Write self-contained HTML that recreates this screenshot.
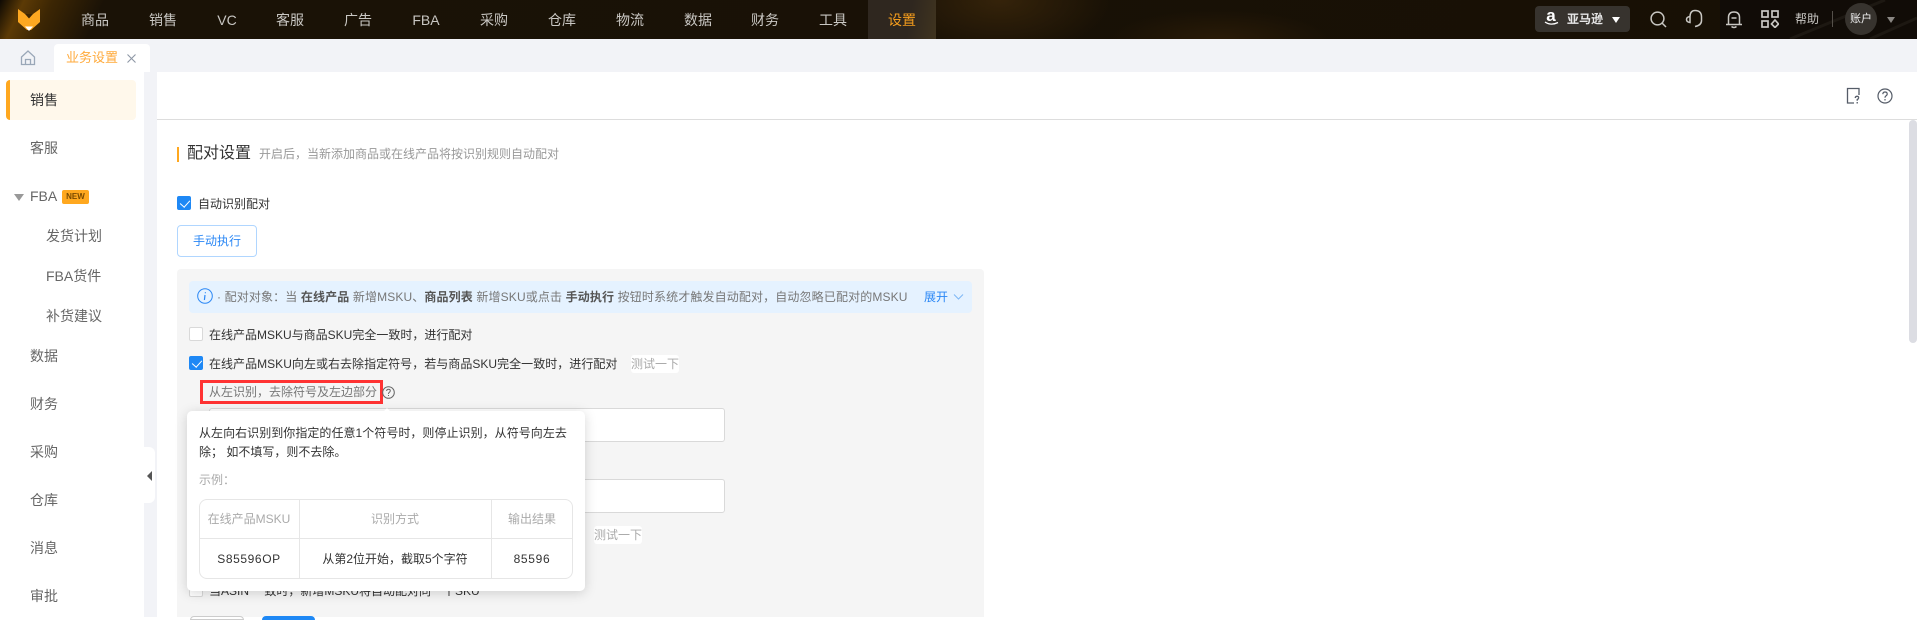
<!DOCTYPE html>
<html lang="zh"><head><meta charset="utf-8"><title>业务设置</title>
<style>
*{box-sizing:border-box}
html,body{margin:0;padding:0;width:1917px;height:617px;overflow:hidden;background:#fff;font-family:"Liberation Sans","Noto Sans CJK SC",sans-serif;font-size:12px;color:#333}
.a{position:absolute;white-space:nowrap}
.t{position:absolute;white-space:nowrap;line-height:20px;height:20px}
.nav{position:absolute;top:10px;width:68px;text-align:center;font-size:14px;line-height:20px;color:#c9c7c3}
.side{position:absolute;left:30px;font-size:14px;line-height:20px;color:#666;white-space:nowrap}
.sub{position:absolute;left:46px;font-size:14px;line-height:20px;color:#666;white-space:nowrap}
.cb{position:absolute;width:14px;height:14px;border-radius:2px;background:#fff;border:1px solid #d9d9d9}
.cb.on{background:#1e88f5;border-color:#1e88f5}
.cb.on:after{content:"";position:absolute;left:3.5px;top:1px;width:5px;height:8px;border:solid #fff;border-width:0 1.3px 1.3px 0;transform:rotate(42deg)}
.g{color:#999}
.test{position:absolute;color:#aaa;background:#fff;border-radius:3px;line-height:18px;height:18px;font-size:12px;white-space:nowrap}
.input{position:absolute;left:209px;width:516px;height:34px;background:#fff;border:1px solid #d9d9d9;border-radius:3px}
</style></head><body>

<!-- header -->
<div class="a" style="left:0;top:0;width:1917px;height:39px;background:
radial-gradient(ellipse 110px 55px at 1000px 0,#35230a 0,rgba(53,35,10,0) 100%),
radial-gradient(ellipse 110px 30px at 1220px 40px,#2a1b08 0,rgba(42,27,8,0) 100%),
linear-gradient(115deg,#0e0a04 0,#5c3a05 22px,#3c2604 48px,#1a1206 95px,#171005 100%)"></div>
<div class="a" style="left:1720px;top:0;width:197px;height:39px;background:#110c07"></div>
<svg class="a" style="left:1720px;top:0" width="197" height="39"><path d="M70 39L165 0M150 39L197 18" stroke="#1d1812" stroke-width="3" fill="none"/></svg>

<svg class="a" style="left:18px;top:9px" width="22" height="22" viewBox="0 0 22 22"><path d="M0 0L7 5H15L22 0V13L13 21H9L0 13Z" fill="#fda821"/><path d="M7 5L11 9.5L15 5Z" fill="#3a2505"/><path d="M7 17.5H15L11 22Z" fill="#fff"/></svg>

<div class="nav" style="left:61px">商品</div><div class="nav" style="left:129px">销售</div><div class="nav" style="left:193px">VC</div><div class="nav" style="left:256px">客服</div><div class="nav" style="left:324px">广告</div><div class="nav" style="left:392px">FBA</div><div class="nav" style="left:460px">采购</div><div class="nav" style="left:528px">仓库</div><div class="nav" style="left:596px">物流</div><div class="nav" style="left:664px">数据</div><div class="nav" style="left:731px">财务</div><div class="nav" style="left:799px">工具</div>
<div class="a" style="left:868px;top:0;width:68px;height:39px;background:linear-gradient(100deg,#2f271f 0,#2f271f 60%,#40341f 100%)"></div>
<div class="nav" style="left:868px;color:#f59d1c">设置</div>

<div class="a" style="left:1535px;top:6px;width:95px;height:26px;background:#37332e;border-radius:4px"></div>
<div class="a" style="left:1543px;top:7px;width:16px;font-size:17px;font-weight:bold;line-height:18px;color:#fff;text-align:center">a</div>
<svg class="a" style="left:1543px;top:21px" width="17" height="6"><path d="M2 1Q8 5 15 1.5" stroke="#fff" stroke-width="1.3" fill="none"/></svg>
<div class="t" style="left:1567px;top:9px;color:#e6e6e6;font-size:12px;font-weight:bold">亚马逊</div>
<div class="a" style="left:1612px;top:17px;width:0;height:0;border:4px solid transparent;border-top:6px solid #fff;border-bottom:0"></div>

<svg class="a" style="left:1649px;top:10px" width="19" height="19" viewBox="0 0 19 19" fill="none" stroke="#c9c7c3" stroke-width="1.5"><circle cx="8.5" cy="8.5" r="6.4"/><path d="M13 13L17 17"/></svg>
<svg class="a" style="left:1685px;top:9px" width="18" height="20" viewBox="0 0 18 20" fill="none" stroke="#c9c7c3" stroke-width="1.5"><path d="M5 7Q5.5 1.5 10 1.5Q16.5 1.5 16.5 8V12Q16 16.5 10 17.5"/><path d="M5 7.5Q1.5 8 1.5 10.5Q1.5 13 5 13.5Z"/></svg>
<svg class="a" style="left:1725px;top:10px" width="18" height="19" viewBox="0 0 18 19" fill="none" stroke="#c9c7c3" stroke-width="1.5"><path d="M3.5 14V7.5Q3.5 2 9 2Q14.5 2 14.5 7.5V14"/><path d="M1 14.5H17"/><path d="M6.5 8H11.5"/><path d="M6.5 16.5Q9 18.5 11.5 16.5"/></svg>
<svg class="a" style="left:1761px;top:10px" width="18" height="18" viewBox="0 0 18 18" fill="none" stroke="#c9c7c3" stroke-width="1.7"><rect x="1" y="1" width="6" height="6"/><rect x="11" y="1" width="6" height="6"/><rect x="1" y="11" width="6" height="6"/><path d="M14 10L17.5 14L14 17.5L10.5 14Z"/></svg>
<div class="t" style="left:1795px;top:9px;color:#c9c7c3">帮助</div>
<div class="a" style="left:1832px;top:11px;width:1px;height:16px;background:#55504a"></div>
<div class="a" style="left:1845px;top:3px;width:32px;height:32px;border-radius:50%;background:#37332e;color:#f0f0f0;font-size:11px;line-height:33px;text-align:center">账户</div>
<div class="a" style="left:1887px;top:17px;width:0;height:0;border:4px solid transparent;border-top:6px solid #8a8783;border-bottom:0"></div>

<!-- tab strip -->
<div class="a" style="left:0;top:39px;width:1917px;height:33px;background:#f2f3f7"></div>
<svg class="a" style="left:20px;top:50px" width="16" height="16" viewBox="0 0 16 16" fill="none" stroke="#9aa7b8" stroke-width="1.3"><path d="M1.5 7L8 1L14.5 7V14.5H1.5Z"/><path d="M5.5 14.5V9.5H10.5V14.5"/></svg>
<div class="a" style="left:54px;top:44px;width:96px;height:29px;background:#fff;border-radius:4px 4px 0 0"></div>
<div class="t" style="left:66px;top:48px;color:#ffaa3b;font-size:13px">业务设置</div>
<svg class="a" style="left:126px;top:53px" width="11" height="11" fill="none" stroke="#8d97a5" stroke-width="1.1"><path d="M1.5 1.5L9.5 9.5M9.5 1.5L1.5 9.5"/></svg>

<!-- sidebar -->
<div class="a" style="left:0;top:72px;width:144px;height:545px;background:#fff"></div>
<div class="a" style="left:144px;top:72px;width:13px;height:545px;background:#f2f3f7"></div>
<div class="a" style="left:6px;top:80px;width:130px;height:40px;background:#fff8eb;border-radius:4px;border-left:4px solid #ffa81f"></div>
<div class="side" style="top:90px;color:#333">销售</div>
<div class="side" style="top:138px">客服</div>
<div class="a" style="left:14px;top:194px;width:0;height:0;border:5.5px solid transparent;border-top:7px solid #999;border-bottom:0"></div>
<div class="side" style="top:186px">FBA</div>
<div class="a" style="left:62px;top:190px;width:27px;height:14px;background:#ffa81f;border-radius:2px;color:#7a4a00;font-size:8px;line-height:14px;text-align:center;font-weight:bold">NEW</div>
<div class="sub" style="top:226px">发货计划</div>
<div class="sub" style="top:266px">FBA货件</div>
<div class="sub" style="top:306px">补货建议</div>
<div class="side" style="top:346px">数据</div>
<div class="side" style="top:394px">财务</div>
<div class="side" style="top:442px">采购</div>
<div class="side" style="top:490px">仓库</div>
<div class="side" style="top:538px">消息</div>
<div class="side" style="top:586px">审批</div>
<div class="a" style="left:144px;top:447px;width:11px;height:56px;background:#fff;border-radius:0 6px 6px 0"></div>
<div class="a" style="left:147px;top:471px;width:0;height:0;border:5px solid transparent;border-right:5px solid #555;border-left:0"></div>

<!-- content -->
<div class="a" style="left:157px;top:72px;width:1760px;height:48px;background:#fff;border-bottom:1px solid #ddd"></div>
<svg class="a" style="left:1846px;top:87px" width="14" height="17" viewBox="0 0 14 17" fill="none" stroke="#555c68" stroke-width="1.3"><path d="M8 16H1.5V1.5H13V8"/><path d="M9.2 11Q9.4 9.3 11 9.3Q12.8 9.3 12.6 11Q12.4 12 11.2 12.6V13.8"/><path d="M11.2 15V16.5"/></svg>
<svg class="a" style="left:1877px;top:88px" width="16" height="16" viewBox="0 0 16 16" fill="none" stroke="#555c68" stroke-width="1.2"><circle cx="8" cy="8" r="7"/><path d="M5.8 6.2Q6 4 8 4Q10.2 4 10.2 6Q10.2 7.2 8.8 8Q8 8.5 8 9.8"/><path d="M8 11V12.5"/></svg>
<div class="a" style="left:1909px;top:120px;width:8px;height:223px;background:#dcdde3;border-radius:4px"></div>

<div class="a" style="left:177px;top:147px;width:2px;height:15px;background:#ffa81f"></div>
<div class="t" style="left:187px;top:144px;font-size:16px;color:#333;line-height:20px">配对设置</div>
<div class="t" style="left:259px;top:144px;color:#999">开启后，当新添加商品或在线产品将按识别规则自动配对</div>

<div class="cb on" style="left:177px;top:196px"></div>
<div class="t" style="left:198px;top:194px;color:#333">自动识别配对</div>
<div class="a" style="left:177px;top:225px;width:80px;height:32px;border:1px solid #b0d6ff;border-radius:4px;color:#2a87f5;text-align:center;line-height:30px;background:#fff">手动执行</div>

<div class="a" style="left:177px;top:269px;width:807px;height:348px;background:#f5f5f5;border-radius:4px 4px 0 0"></div>
<div class="a" style="left:189px;top:281px;width:783px;height:32px;background:#e5f2ff;border-radius:4px"></div>
<svg class="a" style="left:197px;top:288px" width="16" height="16" viewBox="0 0 16 16" fill="none" stroke="#2a87f5" stroke-width="1"><circle cx="8" cy="8" r="7.3"/><path d="M8.4 4.2V5.2M8 7L7.4 12" stroke-width="1.2"/></svg>
<div class="t" style="left:217px;top:287px;color:#777;letter-spacing:.13px">· 配对对象：当 <b style="color:#555">在线产品</b> 新增MSKU、<b style="color:#555">商品列表</b> 新增SKU或点击 <b style="color:#555">手动执行</b> 按钮时系统才触发自动配对，自动忽略已配对的MSKU</div>
<div class="t" style="left:924px;top:287px;color:#2a87f5">展开</div>
<svg class="a" style="left:953px;top:293px" width="11" height="8" fill="none" stroke="#7db7f5" stroke-width="1"><path d="M1 1.5L5.5 6L10 1.5"/></svg>

<div class="cb" style="left:189px;top:327px"></div>
<div class="t" style="left:209px;top:325px;color:#333">在线产品MSKU与商品SKU完全一致时，进行配对</div>
<div class="cb on" style="left:189px;top:356px"></div>
<div class="t" style="left:209px;top:354px;color:#333;letter-spacing:.03px">在线产品MSKU向左或右去除指定符号，若与商品SKU完全一致时，进行配对</div>
<div class="test" style="left:631px;top:355px">测试一下</div>

<div class="a" style="left:200px;top:380px;width:183px;height:24px;border:3px solid #f33"></div>
<div class="t" style="left:209px;top:382px;color:#777">从左识别，去除符号及左边部分</div>
<svg class="a" style="left:382px;top:386px" width="13" height="13" viewBox="0 0 13 13" fill="none" stroke="#666" stroke-width="1"><circle cx="6.5" cy="6.5" r="5.8"/><path d="M4.6 5Q4.8 3.2 6.5 3.2Q8.3 3.2 8.3 4.8Q8.3 5.7 7.2 6.4Q6.5 6.9 6.5 8"/><path d="M6.5 9V10"/></svg>

<div class="input" style="top:408px"></div>
<div class="input" style="top:479px"></div>
<div class="test" style="left:594px;top:526px">测试一下</div>
<div class="cb" style="left:189px;top:583px"></div>
<div class="t" style="left:209px;top:581px;color:#333">当ASIN 一致时，新增MSKU将自动配对同一个SKU</div>
<div class="a" style="left:190px;top:616px;width:54px;height:4px;background:#fff;border:1px solid #ccc;border-radius:4px 4px 0 0"></div>
<div class="a" style="left:262px;top:616px;width:53px;height:4px;background:#1e88f5;border-radius:4px 4px 0 0"></div>

<!-- popover -->
<div class="a" style="left:187px;top:411px;width:398px;height:180px;background:#fff;border-radius:5px;box-shadow:0 2px 12px rgba(0,0,0,.16)"></div>
<div class="a" style="left:382px;top:406px;width:10px;height:10px;background:#fff;transform:rotate(45deg) translate(3px,3px)"></div>
<div class="t" style="left:199px;top:423px;color:#333;letter-spacing:.04px">从左向右识别到你指定的任意1个符号时，则停止识别，从符号向左去</div>
<div class="t" style="left:199px;top:442px;color:#333">除； 如不填写，则不去除。</div>
<div class="t" style="left:199px;top:470px;color:#aaa">示例：</div>
<div class="a" style="left:199px;top:499px;width:374px;height:80px;border:1px solid #e6e6e6;border-radius:8px"></div>
<div class="a" style="left:199px;top:538px;width:374px;height:1px;background:#e6e6e6"></div>
<div class="a" style="left:299px;top:499px;width:1px;height:80px;background:#e6e6e6"></div>
<div class="a" style="left:491px;top:499px;width:1px;height:80px;background:#e6e6e6"></div>
<div class="t" style="left:199px;top:509px;width:100px;text-align:center;color:#aaa">在线产品MSKU</div>
<div class="t" style="left:299px;top:509px;width:192px;text-align:center;color:#aaa">识别方式</div>
<div class="t" style="left:491px;top:509px;width:82px;text-align:center;color:#aaa">输出结果</div>
<div class="t" style="left:199px;top:549px;width:100px;text-align:center;color:#333;letter-spacing:.6px">S85596OP</div>
<div class="t" style="left:299px;top:549px;width:192px;text-align:center;color:#333">从第2位开始，截取5个字符</div>
<div class="t" style="left:491px;top:549px;width:82px;text-align:center;color:#333;letter-spacing:.7px">85596</div>
</body></html>
